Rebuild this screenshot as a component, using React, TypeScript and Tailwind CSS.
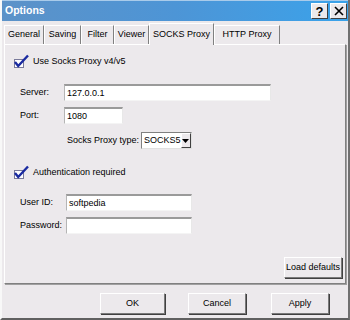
const font = "font-['Liberation_Sans',Arial,sans-serif]";

function CheckIcon() {
  return (
    <svg width="17" height="15" viewBox="0 0 17 15" className="shrink-0">
      <rect x="1.5" y="5.5" width="9" height="8" fill="#fff" stroke="#7a7a9a" />
      <path d="M2 8 L5.2 12 L15 1.5" fill="none" stroke="#1a2aa0" strokeWidth="2.4" />
    </svg>
  );
}

function Field({ w, value }: { w: string; value?: string }) {
  return (
    <div
      className={`${w} h-[17px] bg-white border-t-2 border-l border-t-[#9a9a9a] border-l-[#b5b5b5] border-r border-b border-r-[#e8e8e8] border-b-[#f4f4f4] px-[2px] text-[9px] leading-[14px] text-black whitespace-nowrap`}
    >
      {value}
    </div>
  );
}

function Btn({ label, w, h = "h-[21px]", cls = "" }: { label: string; w: string; h?: string; cls?: string }) {
  return (
    <div
      className={`${w} ${h} ${cls} flex items-center justify-center whitespace-nowrap text-[9px] text-black border border-t-white border-l-white border-r-[#7a7a7a] border-b-[#7a7a7a] shadow-[1px_1px_0_#404040] bg-[#ece9ec]`}
    >
      {label}
    </div>
  );
}

const tabs: [string, string][] = [
  ["General", "w-[40px]"],
  ["Saving", "w-[37px]"],
  ["Filter", "w-[33px]"],
  ["Viewer", "w-[35px]"],
];

export default function App() {
  return (
    <div className={`${font} w-[350px] h-[320px] overflow-hidden bg-[#ece9ec] relative border-l-2 border-l-[#f8f8f8] border-b-2 border-b-[#606060] border-r-2 border-r-[#707070] whitespace-nowrap`}>
      {/* title bar */}
      <div className="h-[21px] flex items-center justify-between bg-gradient-to-r from-[#5c92c8] via-[#4d95d6] to-[#39a2ea] border-t border-t-[#a9cbea] pl-[3px] pr-[1px]">
        <span className="text-white font-bold text-[10.5px]">Options</span>
        <div className="flex gap-[2px]">
          <div className="w-[17px] h-[16px] bg-[#ece9ec] border border-t-white border-l-white border-r-[#404040] border-b-[#404040] flex items-center justify-center text-[13px] font-bold leading-none text-black">?</div>
          <div className="w-[17px] h-[16px] bg-[#ece9ec] border border-t-white border-l-white border-r-[#404040] border-b-[#404040] flex items-center justify-center">
            <svg width="10" height="10" viewBox="0 0 10 10">
              <path d="M1 1 L9 9 M9 1 L1 9" stroke="#000" strokeWidth="1.6" />
            </svg>
          </div>
        </div>
      </div>

      {/* tabs */}
      <div className="flex items-end h-[22px] pl-[2px] mt-[1px]">
        {tabs.map(([t, w]) => (
          <div
            key={t}
            className={`${w} h-[19px] flex items-center justify-center text-[9px] text-black border-t border-l border-t-white border-l-white border-r border-r-[#808080]`}
          >
            {t}
          </div>
        ))}
        <div className="w-[65px] h-[22px] flex items-center justify-center text-[9px] text-black border-t border-l border-t-white border-l-white border-r border-r-[#808080] bg-[#ece9ec] relative top-[1px] z-10">
          SOCKS Proxy
        </div>
        <div className="w-[66px] h-[19px] flex items-center justify-center text-[9px] text-black border-t border-l border-t-white border-l-white border-r border-r-[#808080]">
          HTTP Proxy
        </div>
      </div>

      {/* panel */}
      <div className="mx-[2px] h-[240px] border-t border-l border-t-white border-l-white border-r border-b border-r-[#808080] border-b-[#808080] shadow-[1px_1px_0_#a0a0a0] flex flex-col text-[9px] text-black">
        <div className="flex items-center gap-[3px] pl-[8px] mt-[9px] h-[15px]">
          <CheckIcon />
          <span>Use Socks Proxy v4/v5</span>
        </div>

        <div className="flex items-center mt-[15px] pl-[15px]">
          <span className="w-[44px]">Server:</span>
          <Field w="w-[207px]" value="127.0.0.1" />
        </div>
        <div className="flex items-center mt-[6px] pl-[15px]">
          <span className="w-[44px]">Port:</span>
          <Field w="w-[59px]" value="1080" />
        </div>
        <div className="flex items-center mt-[8px] pl-[60px]">
          <span className="w-[76px] text-right pr-[2px]">Socks Proxy type:</span>
          <div className="w-[51px] h-[17px] bg-white border-t border-l border-t-[#808080] border-l-[#808080] border-r border-b border-r-[#e0e0e0] border-b-[#e0e0e0] flex items-center">
            <span className="flex-1 pl-[2px] text-[9px] leading-none">SOCKS5</span>
            <div className="w-[14px] h-[15px] bg-[#ece9ec] border border-t-white border-l-white border-r-[#404040] border-b-[#404040] flex items-center justify-center">
              <svg width="7" height="4" viewBox="0 0 7 4"><path d="M0 0 H7 L3.5 4 Z" fill="#000" /></svg>
            </div>
          </div>
        </div>

        <div className="flex items-center gap-[3px] pl-[8px] mt-[16px] h-[15px]">
          <CheckIcon />
          <span>Authentication required</span>
        </div>

        <div className="flex items-center mt-[14px] pl-[15px]">
          <span className="w-[46px]">User ID:</span>
          <Field w="w-[126px]" value="softpedia" />
        </div>
        <div className="flex items-center mt-[6px] pl-[15px]">
          <span className="w-[46px]">Password:</span>
          <Field w="w-[126px]" />
        </div>

        <div className="flex justify-end mt-[23px] pr-[3px]">
          <Btn label="Load defaults" w="w-[58px]" />
        </div>
      </div>

      {/* footer */}
      <div className="flex justify-end pr-[19px] mt-[9px]">
        <Btn label="OK" w="w-[65px]" />
        <Btn label="Cancel" w="w-[58px]" cls="ml-[23px]" />
        <Btn label="Apply" w="w-[58px]" cls="ml-[25px]" />
      </div>
    </div>
  );
}
